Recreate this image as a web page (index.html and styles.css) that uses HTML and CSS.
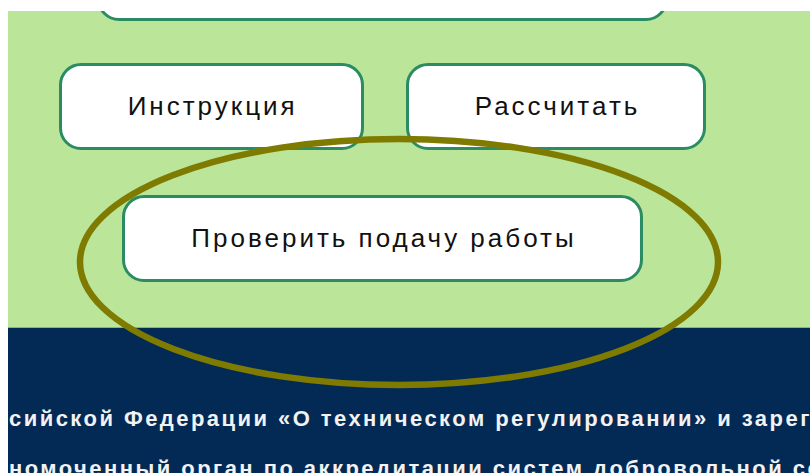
FILE: index.html
```html
<!DOCTYPE html>
<html lang="ru">
<head>
<meta charset="utf-8">
<title>Проверка работы</title>
<link rel="stylesheet" href="styles.css">
</head>
<body>
<div class="page">
  <section class="actions">
    <div class="stack">
      <div class="btn btn-top">Загрузить работу</div>
      <div class="row">
        <div class="btn">Инструкция</div>
        <div class="btn">Рассчитать</div>
      </div>
      <div class="row">
        <div class="btn">Проверить подачу работы</div>
      </div>
    </div>
  </section>
  <footer class="footer">
    <p class="legal">
      <span class="line">сийской Федерации «О техническом регулировании» и зарегистрирована</span>
      <span class="line">номоченный орган по аккредитации систем добровольной сертификации</span>
    </p>
  </footer>
  <svg class="mark" width="810" height="473" viewBox="0 0 810 473">
    <ellipse cx="399" cy="262" rx="319" ry="123" fill="none" stroke="#7f7b00" stroke-width="6.5"/>
  </svg>
</div>
</body>
</html>
```

FILE: styles.css
```css
html, body {
  height: 100%;
}

body {
  margin: 11px 0 0 8px;
  background: #ffffff;
  overflow: hidden;
  font-family: "Liberation Sans", Arial, sans-serif;
}

.page {
  width: 802px;
}

.actions {
  background: #bbe699;
  padding-bottom: 45px;
  overflow: hidden;
}

.stack {
  width: 749px;
  display: flex;
  flex-direction: column;
  align-items: center;
}

.row {
  display: flex;
  gap: 42px;
  justify-content: center;
}

.btn {
  box-sizing: border-box;
  height: 87px;
  padding: 0 63px 0 66px;
  display: flex;
  align-items: center;
  justify-content: center;
  background: #ffffff;
  border: 3px solid #2b8c63;
  border-radius: 22px;
  color: #111111;
  font-size: 26px;
  letter-spacing: 3px;
  white-space: nowrap;
}

.btn-top {
  width: 571px;
  margin-top: -77px;
  margin-bottom: 42px;
  color: transparent;
}

.row + .row {
  margin-top: 45px;
}

.footer {
  background: #032a55;
  border-top: 1px solid #86a9c4;
  height: 146px;
  overflow: hidden;
}

.legal {
  margin: 0;
  padding-top: 66px;
  color: #f2f2f2;
  font-size: 22px;
  font-weight: bold;
  line-height: 50px;
  letter-spacing: 2.45px;
  white-space: nowrap;
}

.line {
  display: block;
  padding-left: 1px;
}

.mark {
  position: absolute;
  left: 0;
  top: 0;
  pointer-events: none;
}
```
